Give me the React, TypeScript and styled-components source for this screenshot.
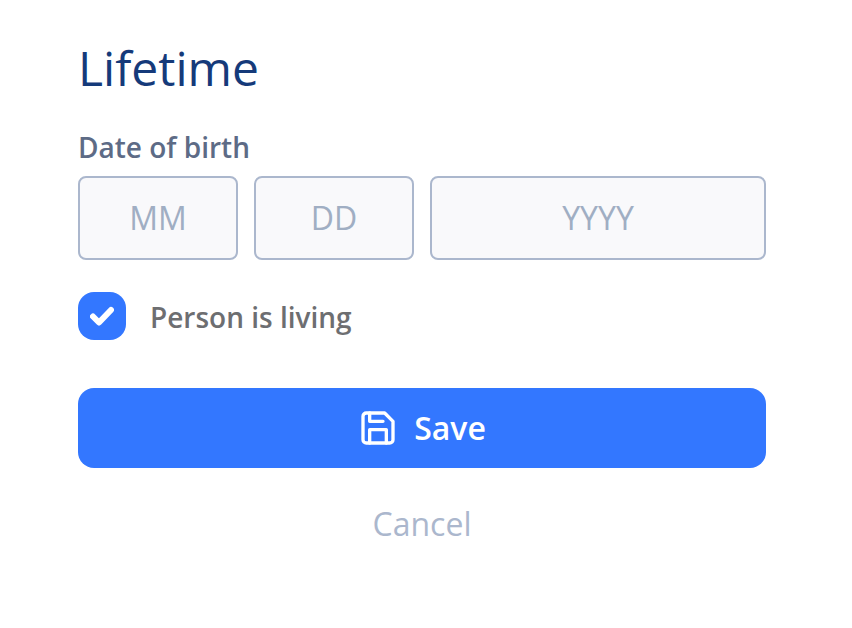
import React from "react";
import styled, { createGlobalStyle } from "styled-components";

const GlobalStyle = createGlobalStyle`
  * { box-sizing: border-box; }
  body { margin: 0; background: #fff; font-family: "Open Sans", sans-serif; }
`;

const Form = styled.form`
  width: 852px;
  height: 628px;
  padding: 35px 86px 0 78px;
  display: flex;
  flex-direction: column;
`;

const Title = styled.h1`
  margin: 0;
  height: 66px;
  line-height: 66px;
  font-size: 48px;
  font-weight: 400;
  color: #153a7a;
`;

const FieldLabel = styled.label`
  margin-top: 26px;
  height: 40px;
  line-height: 40px;
  font-size: 28px;
  font-weight: 600;
  color: #5d6b86;
`;

const DateRow = styled.div`
  margin-top: 9px;
  display: grid;
  grid-template-columns: 160px 160px 1fr;
  gap: 16px;
`;

const DateInput = styled.input`
  min-width: 0;
  width: 100%;
  height: 84px;
  padding: 0 0 2px;
  border: 2px solid #abb7cd;
  border-radius: 8px;
  background: #f9f9fb;
  font: 400 32px "Open Sans", sans-serif;
  text-align: center;
  outline: none;
  &::placeholder { color: #a0aec3; opacity: 1; }
`;

const CheckRow = styled.div`
  margin-top: 32px;
  display: flex;
  gap: 24px;
`;

const CheckBox = styled.span`
  width: 48px;
  height: 48px;
  border-radius: 16px;
  background: #3377ff;
  display: flex;
  align-items: center;
  justify-content: center;
`;

const CheckText = styled.span`
  height: 50px;
  line-height: 50px;
  margin-bottom: -2px;
  font-size: 28px;
  font-weight: 600;
  color: #6d6e71;
`;

const SaveButton = styled.button`
  margin-top: 48px;
  height: 80px;
  padding: 0;
  border: 0;
  border-radius: 16px;
  background: #3377ff;
  color: #fff;
  font: 600 32px "Open Sans", sans-serif;
  display: flex;
  align-items: center;
  justify-content: center;
  gap: 16px;
`;

const SaveLabel = styled.span`
  margin-bottom: 2px;
`;

const CancelButton = styled.button`
  align-self: center;
  margin-top: 34px;
  padding: 0;
  border: 0;
  background: none;
  color: #abb7cd;
  font: 400 32px/44px "Open Sans", sans-serif;
`;

export default function App() {
  return (
    <>
      <GlobalStyle />
      <Form>
        <Title>Lifetime</Title>
        <FieldLabel htmlFor="month">Date of birth</FieldLabel>
        <DateRow>
          <DateInput id="month" placeholder="MM" />
          <DateInput placeholder="DD" />
          <DateInput placeholder="YYYY" />
        </DateRow>
        <CheckRow>
          <CheckBox role="checkbox" aria-checked="true">
            <svg width="24" height="20" viewBox="0 0 24 20" fill="none" stroke="#fff" strokeWidth="6" strokeLinecap="round" strokeLinejoin="round">
              <path d="M3 10.5l6 6L21 4" />
            </svg>
          </CheckBox>
          <CheckText>Person is living</CheckText>
        </CheckRow>
        <SaveButton type="button">
          <svg width="40" height="40" viewBox="0 0 24 24" fill="none" stroke="#fff" strokeWidth="2" strokeLinecap="round" strokeLinejoin="round">
            <path d="M19 21H5a2 2 0 0 1-2-2V5a2 2 0 0 1 2-2h11l5 5v11a2 2 0 0 1-2 2z" />
            <path d="M17 21v-8H7v8" />
            <path d="M7 3v5h8" />
          </svg>
          <SaveLabel>Save</SaveLabel>
        </SaveButton>
        <CancelButton type="button">Cancel</CancelButton>
      </Form>
    </>
  );
}
